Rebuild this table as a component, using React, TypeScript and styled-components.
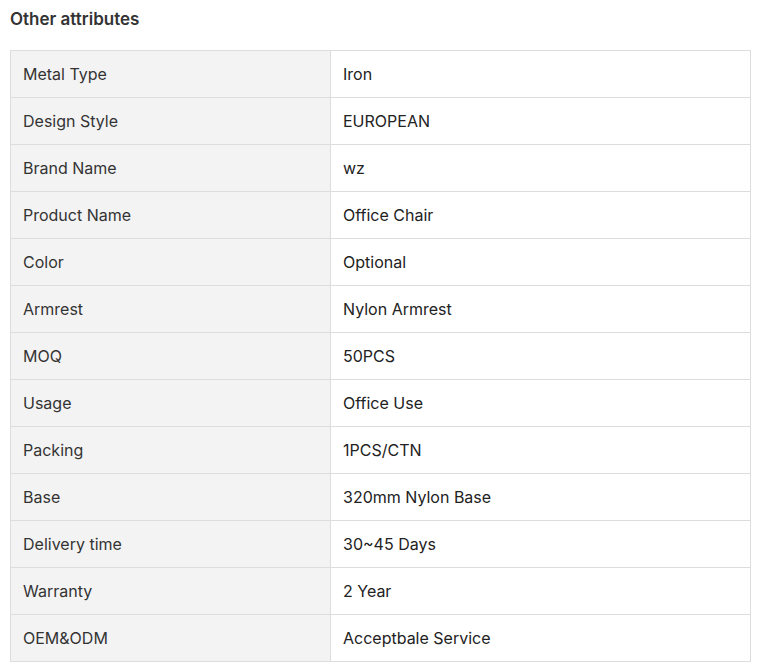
import React from "react";
import styled, { createGlobalStyle } from "styled-components";

const Global = createGlobalStyle`
  html, body { margin: 0; padding: 0; background: #fff; }
  body { font-family: Inter, "Noto Sans", sans-serif; }
`;

const Page = styled.div`
  padding: 8px 8px 0 10px;
  width: 741px;
`;

const Title = styled.h3`
  margin: 0;
  font-size: 17px;
  line-height: 22px;
  font-weight: 600;
  color: #333;
`;

const Table = styled.table`
  margin-top: 20px;
  width: 741px;
  border-collapse: collapse;
  table-layout: fixed;
  border: 1px solid #ddd;
`;

const Label = styled.td`
  width: 320px;
  box-sizing: border-box;
  height: 46px;
  padding: 0 12px;
  background: #f3f3f3;
  border: 1px solid #ddd;
  color: #333;
  font-size: 16px;
  line-height: 20px;
  vertical-align: middle;
`;

const Value = styled.td`
  height: 46px;
  padding: 0 12px;
  background: #fff;
  border: 1px solid #ddd;
  color: #222;
  font-size: 16px;
  line-height: 20px;
  vertical-align: middle;
`;

const rows: [string, string][] = [
  ["Metal Type", "Iron"],
  ["Design Style", "EUROPEAN"],
  ["Brand Name", "wz"],
  ["Product Name", "Office Chair"],
  ["Color", "Optional"],
  ["Armrest", "Nylon Armrest"],
  ["MOQ", "50PCS"],
  ["Usage", "Office Use"],
  ["Packing", "1PCS/CTN"],
  ["Base", "320mm Nylon Base"],
  ["Delivery time", "30~45 Days"],
  ["Warranty", "2 Year"],
  ["OEM&ODM", "Acceptbale Service"],
];

export default function App() {
  return (
    <>
      <Global />
      <Page>
        <Title>Other attributes</Title>
        <Table>
          <tbody>
            {rows.map(([k, v]) => (
              <tr key={k}>
                <Label>{k}</Label>
                <Value>{v}</Value>
              </tr>
            ))}
          </tbody>
        </Table>
      </Page>
    </>
  );
}
